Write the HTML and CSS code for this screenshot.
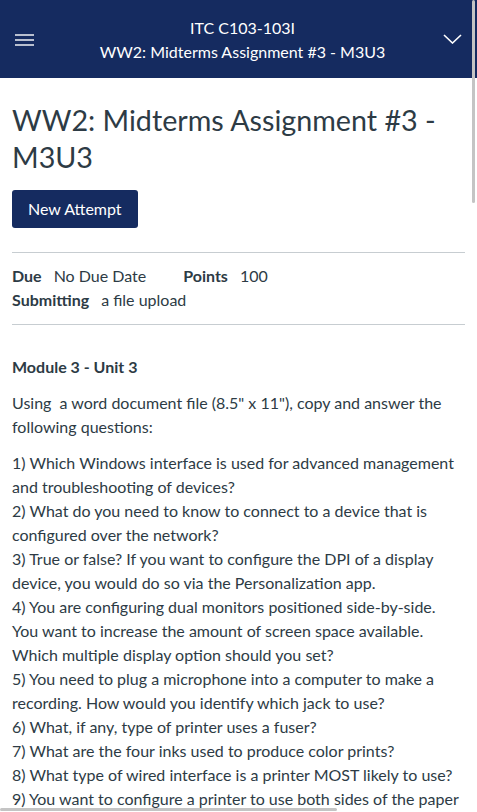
FILE: index.html
```html
<!DOCTYPE html>
<html lang="en">
<head>
<meta charset="utf-8">
<title>WW2: Midterms Assignment #3 - M3U3</title>
<link rel="stylesheet" href="styles.css">
</head>
<body>
<header class="topbar">
  <button class="menu-btn" aria-label="Menu">
    <svg width="19" height="12" viewBox="0 0 19 12"><g stroke="#fff" stroke-width="1.4"><line x1="0" y1="1" x2="19" y2="1"/><line x1="0" y1="6" x2="19" y2="6"/><line x1="0" y1="11" x2="19" y2="11"/></g></svg>
  </button>
  <div class="crumbs">
    <div class="crumb">ITC C103-103I</div>
    <div class="crumb">WW2: Midterms Assignment #3 - M3U3</div>
  </div>
  <button class="more-btn" aria-label="More">
    <svg width="19" height="10" viewBox="0 0 19 10"><polyline points="1,1 9.5,9 18,1" fill="none" stroke="#fff" stroke-width="1.6"/></svg>
  </button>
</header>
<main class="content">
  <h1 class="title">WW2: Midterms Assignment #3 - M3U3</h1>
  <button class="btn-primary">New Attempt</button>
  <div class="details">
    <div class="detail-row">
      <span class="detail"><span class="label">Due</span><span class="value">No Due Date</span></span>
      <span class="detail"><span class="label">Points</span><span class="value">100</span></span>
    </div>
    <div class="detail-row">
      <span class="detail"><span class="label">Submitting</span><span class="value">a file upload</span></span>
    </div>
  </div>
  <div class="description">
    <p><strong>Module 3 - Unit 3</strong></p>
    <p>Using&nbsp; a word document file (8.5" x 11"), copy and answer the following questions:</p>
    <p>1) Which Windows interface is used for advanced management and troubleshooting of devices?<br>
    2) What do you need to know to connect to a device that is configured over the network?<br>
    3) True or false? If you want to configure the DPI of a display device, you would do so via the Personalization app.<br>
    4) You are configuring dual monitors positioned side-by-side. You want to increase the amount of screen space available. Which multiple display option should you set?<br>
    5) You need to plug a microphone into a computer to make a recording. How would you identify which jack to use?<br>
    6) What, if any, type of printer uses a fuser?<br>
    7) What are the four inks used to produce color prints?<br>
    8) What type of wired interface is a printer MOST likely to use?<br>
    9) You want to configure a printer to use both sides of the paper by default. How would you do this?</p>
  </div>
</main>
<div class="vscroll"></div>
<div class="hscroll"></div>
</body>
</html>
```
FILE: styles.css
```css
html, body {
  margin: 0;
  padding: 0;
  background: #fff;
  overflow: hidden;
}
body {
  font-family: Lato, "Noto Sans", sans-serif;
  color: #2d3b45;
  font-size: 16px;
  line-height: 1.5;
}
.topbar {
  background: #152b60;
  height: 78px;
  display: flex;
  align-items: center;
  color: #fff;
}
.menu-btn, .more-btn {
  background: none;
  border: 0;
  padding: 0;
  display: flex;
  align-items: center;
  justify-content: center;
  width: 49px;
  height: 78px;
}
.menu-btn { padding-top: 2px; }
.crumbs {
  flex: 1;
  text-align: center;
  font-size: 16px;
  line-height: 24px;
  padding-top: 1px;
  padding-left: 8px;
}
.content {
  padding: 0 12px;
}
.title {
  font-size: 28.7px;
  font-weight: 400;
  line-height: 37px;
  margin: 24px 0 14px;
}
.btn-primary {
  display: block;
  background: #152b60;
  color: #fff;
  border: 0;
  border-radius: 3px;
  font-family: inherit;
  font-size: 16px;
  line-height: 24px;
  padding: 7px 16px;
  height: 38px;
}
.details {
  margin-top: 24px;
  border-top: 1px solid #c7cdd1;
  border-bottom: 1px solid #c7cdd1;
  padding: 11px 0 12px;
}
.detail-row {
  display: flex;
  gap: 37px;
}
.label {
  font-weight: 700;
  margin-right: 12px;
}
.description {
  padding-top: 18px;
}
.description p {
  margin: 12px 0;
}
.vscroll {
  position: fixed;
  top: 0;
  right: 2px;
  width: 3px;
  height: 203px;
  background: #c4c4c4;
  border-radius: 2px;
}
.hscroll {
  position: fixed;
  left: 0;
  bottom: 1px;
  width: 337px;
  height: 3px;
  background: #c4c4c4;
  border-radius: 2px;
}
```
